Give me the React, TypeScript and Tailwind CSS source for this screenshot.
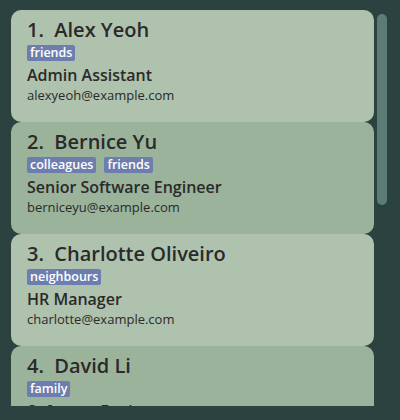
import React from "react";

const people = [
  { n: 1, name: "Alex Yeoh", tags: ["friends"], role: "Admin Assistant", email: "alexyeoh@example.com" },
  { n: 2, name: "Bernice Yu", tags: ["colleagues", "friends"], role: "Senior Software Engineer", email: "berniceyu@example.com" },
  { n: 3, name: "Charlotte Oliveiro", tags: ["neighbours"], role: "HR Manager", email: "charlotte@example.com" },
  { n: 4, name: "David Li", tags: ["family"], role: "Software Engineer", email: "lidavid@example.com" },
];

export default function App() {
  return (
    <div
      className="w-[400px] h-[420px] bg-[#2b4240] overflow-hidden flex flex-col"
      style={{ fontFamily: '"Open Sans", "Noto Sans", sans-serif' }}
    >
      <div className="flex pt-[10px] pl-[11px] h-[406px]">
        <div className="w-[363px] h-[396px] overflow-hidden flex flex-col">
          {people.map((p, i) => (
            <div
              key={p.n}
              className={`shrink-0 h-[112px] rounded-[10px] px-4 pt-[6px] text-[#2a2a2a] ${
                i % 2 === 0 ? "bg-[#afc2ae]" : "bg-[#9cb39b]"
              }`}
            >
              <div className="h-[28px] text-[20px] font-semibold leading-[28px] whitespace-pre">
                {`${p.n}.  ${p.name}`}
              </div>
              <div className="flex gap-2 h-[16px] mt-[1px]">
                {p.tags.map((t) => (
                  <span
                    key={t}
                    className="h-[16px] px-[3px] rounded-[2px] bg-[#6d7eae] text-white text-[12.5px] font-semibold leading-[16px]"
                  >
                    {t}
                  </span>
                ))}
              </div>
              <div className="h-[22px] mt-[3px] text-[16px] font-semibold leading-[22px]">{p.role}</div>
              <div className="h-[19px] text-[13px] leading-[19px]">{p.email}</div>
            </div>
          ))}
        </div>
        <div className="ml-[3px] mt-[4px] w-[10px] h-[191px] rounded-[5px] bg-[#5b7c77]" />
      </div>
    </div>
  );
}
